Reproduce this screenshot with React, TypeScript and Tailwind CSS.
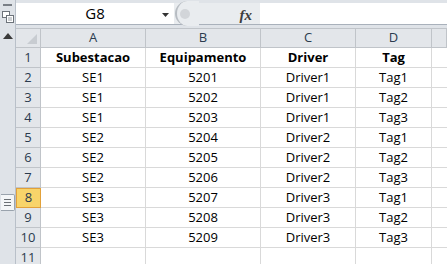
import React from 'react'

const rows = [
  ['Subestacao', 'Equipamento', 'Driver', 'Tag'],
  ['SE1', '5201', 'Driver1', 'Tag1'],
  ['SE1', '5202', 'Driver1', 'Tag2'],
  ['SE1', '5203', 'Driver1', 'Tag3'],
  ['SE2', '5204', 'Driver2', 'Tag1'],
  ['SE2', '5205', 'Driver2', 'Tag2'],
  ['SE2', '5206', 'Driver2', 'Tag3'],
  ['SE3', '5207', 'Driver3', 'Tag1'],
  ['SE3', '5208', 'Driver3', 'Tag2'],
  ['SE3', '5209', 'Driver3', 'Tag3'],
  ['', '', '', ''],
]

const cols = ['A', 'B', 'C', 'D', '']

function LeftStrip() {
  return (
    <div className="flex w-[16px] flex-col items-center border-r border-[#b9c0c9] bg-[#dfe3e8]">
      <div className="mt-[4px] h-[2px] w-[9px] bg-[#7a7f86]" />
      <svg width="12" height="12" viewBox="0 0 12 12" className="mt-[5px]">
        <rect x="0.5" y="0.5" width="7" height="6" fill="#fff" stroke="#6d737a" />
        <rect x="4.5" y="4.5" width="7" height="7" fill="#fff" stroke="#6d737a" />
        <path d="M6 7h4M6 9h4" stroke="#9aa0a6" />
      </svg>
      <svg width="10" height="6" viewBox="0 0 10 6" className="mt-[10px]">
        <path d="M0 6L5 0L10 6Z" fill="#3a3a3a" />
      </svg>
      <div className="mt-[155px] flex h-[17px] w-[14px] flex-col items-center justify-center gap-[2px] rounded-r-[2px] border border-l-0 border-[#9aa3ad] bg-[#f4f6f8]">
        <div className="h-px w-[7px] bg-[#6b7075]" />
        <div className="h-px w-[7px] bg-[#6b7075]" />
        <div className="h-px w-[7px] bg-[#6b7075]" />
      </div>
    </div>
  )
}

function FormulaBar() {
  return (
    <div className="pt-[3px] pb-[3px]">
      <div className="flex h-[22px] border-b border-[#a9b1bb] bg-[#e9ecef]">
        <div className="relative flex w-[158px] items-center justify-center bg-white text-[15px] text-black">
          G8
          <svg width="7" height="4" viewBox="0 0 7 4" className="absolute right-[5px] top-[10px]">
            <path d="M0 0H7L3.5 4Z" fill="#333" />
          </svg>
        </div>
        <div className="relative w-[86px]">
          <div className="absolute left-[1px] top-[-2px] h-[25px] w-[24px] rounded-l-full border-l-2 border-[#b7bcc2] bg-[#e9ecef]" />
          <div className="absolute left-[6px] top-[6px] h-[10px] w-[10px] rounded-full bg-[#d2d5d9]" />
          <span className="absolute right-[8px] top-[1px] font-['Liberation_Serif'] text-[15px] font-bold italic text-[#3c3c3c]">
            fx
          </span>
        </div>
        <div className="flex-1 bg-white" />
      </div>
    </div>
  )
}

export default function App() {
  return (
    <div className="flex h-[264px] w-[447px] overflow-hidden bg-[#dfe3e8] font-['Open_Sans',sans-serif]">
      <LeftStrip />
      <div className="flex min-w-0 flex-1 flex-col">
        <FormulaBar />
        <div className="grid grid-cols-[25px_105px_115px_95px_76px_1fr] bg-white text-[13px]">
          <div className="relative h-[20px] border-r border-b border-t border-[#c0c4c9] bg-[#e3e6ea]">
            <svg width="10" height="10" viewBox="0 0 10 10" className="absolute right-[3px] bottom-[3px]">
              <path d="M10 0V10H0Z" fill="#c8ccd1" />
            </svg>
          </div>
          {cols.map((c, i) => (
            <div
              key={i}
              className="flex h-[20px] items-center justify-center border-r border-b border-t border-[#c0c4c9] bg-[#e3e6ea] text-[#2b3b4e]"
            >
              {c}
            </div>
          ))}
          {rows.map((r, ri) => (
            <React.Fragment key={ri}>
              <div
                className={
                  ri === 7
                    ? 'flex h-[20px] items-center justify-center border border-[#e2a13a] bg-[#f8d46a] text-[#2b3b4e]'
                    : 'flex h-[20px] items-center justify-center border-r border-b border-[#c0c4c9] bg-[#e3e6ea] text-[#2b3b4e]'
                }
              >
                {ri + 1}
              </div>
              {r.map((v, ci) => (
                <div
                  key={ci}
                  className={
                    'flex h-[20px] items-center justify-center border-r border-b border-[#d9d9d9] text-black ' +
                    (ri === 0 ? 'font-bold' : '')
                  }
                >
                  {v}
                </div>
              ))}
              <div className="h-[20px] border-b border-[#d9d9d9]" />
            </React.Fragment>
          ))}
        </div>
      </div>
    </div>
  )
}
